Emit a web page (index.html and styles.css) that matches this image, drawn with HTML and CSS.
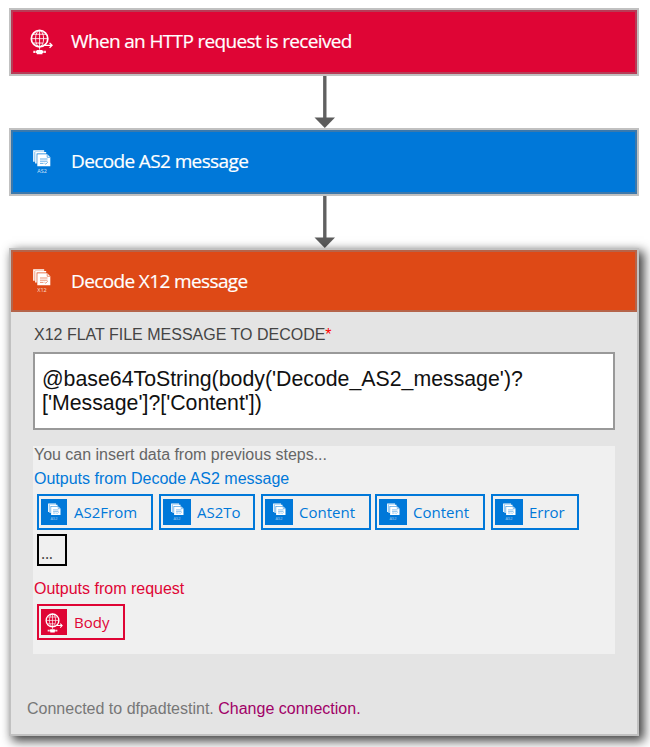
FILE: index.html
```html
<!DOCTYPE html>
<html lang="en">
<head>
<meta charset="utf-8">
<title>Logic app designer</title>
<link rel="stylesheet" href="styles.css">
</head>
<body>
<svg class="defs" aria-hidden="true">
  <symbol id="globe" viewBox="0 0 24 27">
    <g fill="none" stroke="#fff" stroke-width=".9">
      <circle cx="10" cy="10" r="8.6" stroke-width="1.8"/>
      <ellipse cx="10" cy="10" rx="4.2" ry="8.5"/>
      <path d="M10 1.5v20M1.5 10h17M3.2 5.4h13.6M3.2 14.6h10"/>
      <path d="M15 17h8M20.4 14.4l2.6 2.6-2.6 2.6" stroke-width="1.4"/>
    </g>
    <path d="M7 21.8h6v.7h3.5v2.6H13v1.2H7v-1.2H3.500v-2.6H7z" fill="#fff"/>
    <path d="M5.6 22v3.5M14.4 22v3.5" stroke="var(--tone)" stroke-width=".6"/>
  </symbol>
  <symbol id="pages" viewBox="0 0 18 17">
    <path d="M.9 11.800V.9h10.300M2.900 13.400V2.800h10.300" fill="none" stroke="#fff" stroke-width="1.500"/>
    <path d="M4.300 4.200h9.900L17.300 7.200V16.200H4.300z" fill="#fff"/>
    <path d="M14.200 4.500v2.800h2.800M7 9h7.500M7 11.200h7.500M7 13.400h3.500M11.500 13.200l1.200 1 2-2" fill="none" stroke="var(--tone)" stroke-width=".6"/>
  </symbol>
</svg>
<main class="flow">
  <section class="card request">
    <header class="head"><svg class="globe"><use href="#globe"/></svg><h2 class="t-request">When an HTTP request is received</h2></header>
  </section>
  <svg class="arrow" viewBox="0 0 22 52"><path d="M10.8 0v43" stroke="#606060" stroke-width="3.4"/><path d="M.5 41.5h20.5L10.8 52z" fill="#5c5c5c"/></svg>
  <section class="card as2">
    <header class="head"><span class="doc"><svg><use href="#pages"/></svg><small>AS2</small></span><h2 class="t-as2">Decode AS2 message</h2></header>
  </section>
  <svg class="arrow" viewBox="0 0 22 52"><path d="M10.8 0v43" stroke="#606060" stroke-width="3.4"/><path d="M.5 41.5h20.5L10.8 52z" fill="#5c5c5c"/></svg>
  <section class="card x12">
    <header class="head"><span class="doc"><svg><use href="#pages"/></svg><small>X12</small></span><h2 class="t-x12">Decode X12 message</h2></header>
    <div class="body">
      <div class="label"><span class="label-text">X12 FLAT FILE MESSAGE TO DECODE</span><span class="star">*</span></div>
      <div class="field">@base64ToString(body('Decode_AS2_message')?<br>['Message']?['Content'])</div>
      <div class="panel">
        <p class="hint">You can insert data from previous steps...</p>
        <p class="source as2">Outputs from Decode AS2 message</p>
        <div class="chips">
          <div class="chip as2 w-from"><span class="tile"><svg><use href="#pages"/></svg><small>AS2</small></span><span>AS2From</span></div>
          <div class="chip as2 w-to"><span class="tile"><svg><use href="#pages"/></svg><small>AS2</small></span><span>AS2To</span></div>
          <div class="chip as2 w-content"><span class="tile"><svg><use href="#pages"/></svg><small>AS2</small></span><span>Content</span></div>
          <div class="chip as2 w-content second"><span class="tile"><svg><use href="#pages"/></svg><small>AS2</small></span><span>Content</span></div>
          <div class="chip as2 w-error"><span class="tile"><svg><use href="#pages"/></svg><small>AS2</small></span><span>Error</span></div>
        </div>
        <div class="more">...</div>
        <p class="source request">Outputs from request</p>
        <div class="chips">
          <div class="chip request w-body"><span class="tile"><svg class="globe"><use href="#globe"/></svg></span><span>Body</span></div>
        </div>
      </div>
      <footer class="foot"><span>Connected to dfpadtestint.</span> <a>Change connection.</a></footer>
    </div>
  </section>
</main>
</body>
</html>
```
FILE: styles.css
```css
* { box-sizing: border-box; }
body { margin: 0; background: #fff; font-family: "Liberation Sans", Arial, sans-serif; }
.defs { position: absolute; width: 0; height: 0; }
h2, p { margin: 0; font-weight: 400; }
.flow { width: 639px; height: 747px; padding: 8px 0 0 9px; display: flex; flex-direction: column; }
.request { --tone: #df0535; --edge: #b63c57; }
.as2 { --tone: #0078d9; --edge: #3c78ab; }
.x12 { --tone: #de4916; --edge: #b5644a; }

.card { border: 2px solid #c1c1c1; background: #e4e4e4; }
.card.x12 { height: 488px; box-shadow: 4px 4px 10px 1px rgba(0, 0, 0, .75); }
.head { display: flex; align-items: center; height: 64px; border: 2px solid var(--edge); background: var(--tone); color: #fff; padding-left: 18px; }
.x12 .head { height: 62px; }
.head h2 { font: 400 19px/26px "Open Sans", sans-serif; white-space: nowrap; padding-bottom: 2px; -webkit-text-stroke: .2px #fff; }
.x12 .head h2 { padding-bottom: 0; }
.head .globe { width: 23px; height: 26px; margin-right: 18px; margin-left: -1px; }
.doc { display: flex; flex-direction: column; align-items: center; width: 18px; margin: 0 20px 0 2px; }
.doc svg { width: 18px; height: 17px; }
.doc small { font: 5.5px/6px "Open Sans", sans-serif; opacity: .8; margin-top: 1px; }
.t-request { letter-spacing: -.65px; }
.t-as2 { letter-spacing: -.62px; }
.t-x12 { letter-spacing: -.62px; }
.arrow { width: 22px; height: 52px; margin-left: 305px; }

.body { padding: 13px 22px 0; }
.label { font-size: 16px; line-height: 20px; height: 27px; padding-left: 1px; color: #444; white-space: nowrap; }
.star { color: #f00; }
.field { height: 78px; border: 2px solid #999; background: #fff; padding: 13px 7px; font-size: 21.3px; line-height: 24px; color: #111; white-space: nowrap; }
.panel { height: 208px; margin-top: 16px; background: #f0f0f0; }
.hint { font-size: 16px; line-height: 18px; padding-left: 1px; letter-spacing: -.02px; color: #666; }
.source { font-size: 16px; line-height: 18px; padding-left: 1px; color: var(--tone); }
.source.as2 { padding-top: 6px; }
.source.request { padding-top: 14px; }
.chips { display: flex; gap: 6px; padding: 6px 0 0 4px; }
.chip { display: flex; align-items: center; gap: 7px; height: 36px; padding-left: 2px; border: 2px solid var(--tone); color: var(--tone); font: 15px/24px "Open Sans", sans-serif; white-space: nowrap; }
.tile { display: flex; flex-direction: column; align-items: center; width: 28px; height: 26px; padding-top: 4px; background: var(--tone); color: #fff; }
.tile svg { width: 13px; height: 13px; }
.tile small { font: 4px/5px "Open Sans", sans-serif; opacity: .6; }
.tile .globe { width: 18px; height: 20px; }
.w-from { width: 116px; }
.w-to { width: 96px; }
.w-from .tile, .w-body .tile { width: 26px; }
.w-to, .w-content, .w-error { gap: 6px; }
.w-content { width: 110px; }
.second { margin-left: -2px; }
.w-error { width: 88px; }
.w-body { width: 88px; }
.more { width: 30px; height: 32px; margin: 4px 0 0 4px; border: 2px solid #000; padding: 7px 0 0 2px; font: 16px/20px "Open Sans", sans-serif; letter-spacing: -.3px; color: #444; }
.foot { margin: 45px 0 0 -6px; font-size: 16px; line-height: 20px; color: #777; white-space: nowrap; }
.foot a { color: #a10067; }
```
